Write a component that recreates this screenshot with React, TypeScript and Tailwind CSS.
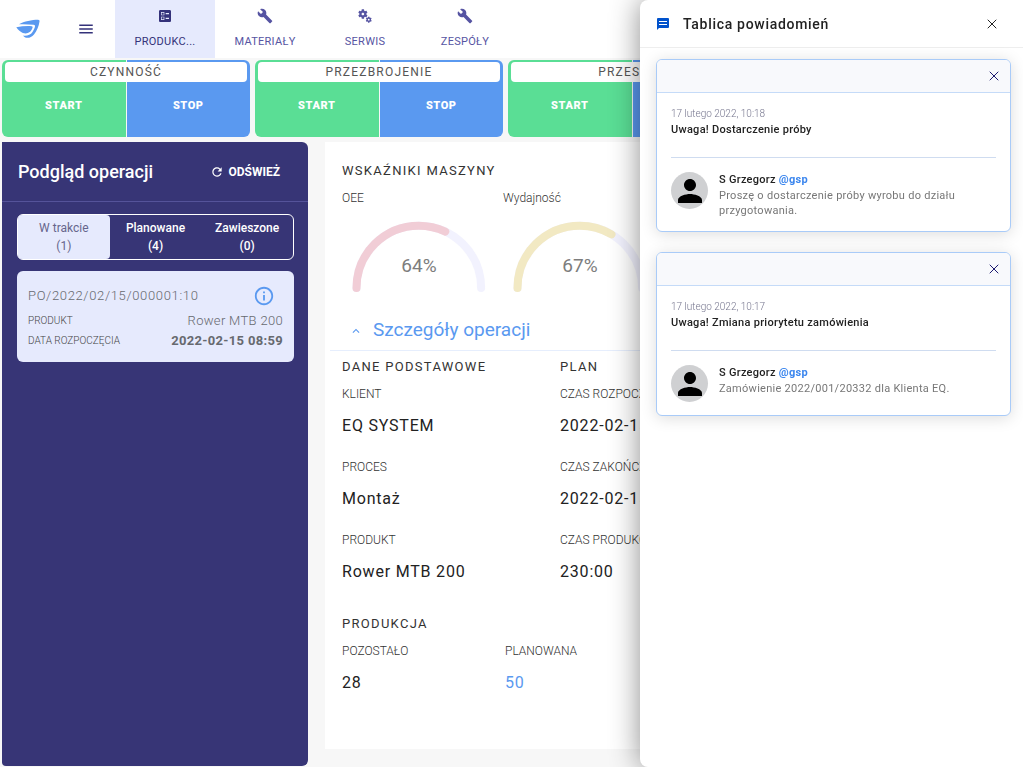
import React from "react";
import {
  MdBallot,
  MdBuild,
  MdInfoOutline,
  MdKeyboardArrowUp,
  MdMenu,
  MdMiscellaneousServices,
  MdPerson,
  MdRefresh,
} from "react-icons/md";
import type { IconType } from "react-icons";
import { X } from "lucide-react";
import clsx from "clsx";

interface NavItem {
  label: string;
  icon: IconType;
  active?: boolean;
}

interface Notification {
  id: number;
  date: string;
  title: string;
  author: string;
  login: string;
  content: string;
}

const NAV_ITEMS: NavItem[] = [
  { label: "PRODUKC...", icon: MdBallot, active: true },
  { label: "MATERIAŁY", icon: MdBuild },
  { label: "SERWIS", icon: MdMiscellaneousServices },
  { label: "ZESPÓŁY", icon: MdBuild },
];

const ACTIONS = ["CZYNNOŚĆ", "PRZEZBROJENIE", "PRZESTÓJ"];

const TABS = [
  { label: "W trakcie", count: 1 },
  { label: "Planowane", count: 4 },
  { label: "Zawieszone", count: 0 },
];

const BASIC_DATA = [
  { label: "KLIENT", value: "EQ SYSTEM" },
  { label: "PROCES", value: "Montaż" },
  { label: "PRODUKT", value: "Rower MTB 200" },
];

const PLAN_DATA = [
  { label: "CZAS ROZPOCZĘCIA", value: "2022-02-15 08:00" },
  { label: "CZAS ZAKOŃCZENIA", value: "2022-02-15 11:50" },
  { label: "CZAS PRODUKCJI", value: "230:00" },
];

const NOTIFICATIONS: Notification[] = [
  {
    id: 1,
    date: "17 lutego 2022, 10:18",
    title: "Uwaga! Dostarczenie próby",
    author: "S Grzegorz",
    login: "@gsp",
    content: "Proszę o dostarczenie próby wyrobu do działu przygotowania.",
  },
  {
    id: 2,
    date: "17 lutego 2022, 10:17",
    title: "Uwaga! Zmiana priorytetu zamówienia",
    author: "S Grzegorz",
    login: "@gsp",
    content: "Zamówienie 2022/001/20332 dla Klienta EQ.",
  },
];

const Logo: React.FC = () => (
  <svg viewBox="0 0 24 20" className="h-5 w-6" fill="#5a99f0">
    <path d="M3 5.300C8 2.200 16 .8 22 .7c1.300 0 1.700.7 1.500 1.900C22.800 7 21 12 18 15.500 15 19 11.200 19.600 8.500 18L6.800 16.600c4 .7 7.700-.6 9.700-3.600 1.500-2.200 2.300-4.300 2.500-5.700.1-1-.4-1.400-1.400-1.500C13 5.300 8 5.100 3 5.300Z" />
    <path d="M.3 8.200c5.200-1 10.700-1.300 15.400-1 .9.100 1.100.6.900 1.300-.5 1.900-1.500 3.500-2.900 4.600-1.900 1.500-4.700 1.600-6.800.8C4.500 12.800 2.200 11 .3 8.200Z" />
  </svg>
);

const MessageIcon: React.FC = () => (
  <svg viewBox="0 0 12 12" className="h-3 w-3 shrink-0">
    <path d="M1 0h10a1 1 0 0 1 1 1v8a1 1 0 0 1-1 1H2l-2 2V1a1 1 0 0 1 1-1Z" fill="#0052cc" />
    <path d="M2 3.500h8M2 6.500h8" stroke="#fff" />
  </svg>
);

const Header: React.FC = () => (
  <header className="flex h-[58px] bg-white text-[#34327a]">
    <a href="#" aria-label="Strona główna" className="flex w-14 items-center justify-end pr-4">
      <Logo />
    </a>
    <button aria-label="Menu" className="flex w-[59px] items-center justify-center">
      <MdMenu className="h-[18px] w-[18px]" />
    </button>
    <nav className="flex">
      {NAV_ITEMS.map(({ label, icon: Icon, active }) => (
        <a
          key={label}
          href="#"
          className={clsx(
            "flex w-[100px] flex-col items-center gap-2.5 pt-2 text-[11px] leading-4 tracking-wide",
            active ? "bg-[#e6eafd]" : "text-[#5654a2]"
          )}
        >
          <Icon className="h-4 w-4" />
          <span>{label}</span>
        </a>
      ))}
    </nav>
  </header>
);

const ActionGroup: React.FC<{ name: string }> = ({ name }) => (
  <section className="relative grid h-[77px] w-[248px] shrink-0 grid-cols-2 gap-px overflow-hidden rounded-md text-[11px] font-black tracking-wider text-white">
    <button className="bg-[#5ade95] pt-4">START</button>
    <button className="bg-[#5a99f0] pt-4">STOP</button>
    <h2 className="absolute inset-x-[3px] top-0.5 rounded bg-white text-center text-xs leading-5 font-normal tracking-widest text-[#555]">
      {name}
    </h2>
  </section>
);

const Sidebar: React.FC = () => (
  <aside className="w-[306px] shrink-0 rounded-r-md rounded-bl-sm bg-[#373576] text-white">
    <div className="flex h-[60px] items-center justify-between border-b border-[#55539a] pr-7 pl-4">
      <h1 className="text-lg font-medium">Podgląd operacji</h1>
      <button className="flex items-center gap-1 text-xs font-bold">
        <MdRefresh className="h-3.5 w-3.5" />
        ODŚWIEŻ
      </button>
    </div>
    <div className="pt-3 pr-3.5 pl-[15px]">
      <div className="grid h-[46px] grid-cols-3 rounded-md border border-white">
        {TABS.map(({ label, count }, index) => (
          <button
            key={label}
            className={clsx(
              "flex flex-col items-center justify-center rounded text-xs leading-[18px]",
              index === 0 ? "bg-[#e6eafd] text-[#66668c]" : "font-medium"
            )}
          >
            <span>{label}</span>
            <span>({count})</span>
          </button>
        ))}
      </div>
      <article className="mt-[11px] flex h-[91px] flex-col rounded-md bg-[#e6eafd] px-[11px] pt-3.5 text-[#66696f]">
        <div className="flex h-[22px] items-center justify-between pr-2 text-[13px] font-light tracking-wider">
          PO/2022/02/15/000001:10
          <button aria-label="Informacje">
            <MdInfoOutline className="h-[22px] w-[22px] text-[#5a99f0]" />
          </button>
        </div>
        <dl className="text-[13px] leading-5 tracking-wide">
          <div className="flex justify-between pt-1">
            <dt className="text-[10px] font-light tracking-normal text-[#444]">PRODUKT</dt>
            <dd className="font-light">Rower MTB 200</dd>
          </div>
          <div className="flex justify-between">
            <dt className="text-[10px] font-light tracking-normal text-[#444]">DATA ROZPOCZĘCIA</dt>
            <dd className="font-bold">2022-02-15 08:59</dd>
          </div>
        </dl>
      </article>
    </div>
  </aside>
);

interface GaugeProps {
  label: string;
  percent: number;
  color: string;
}

const Gauge: React.FC<GaugeProps> = ({ label, percent, color }) => (
  <div className="w-[161px] shrink-0">
    <h3 className="text-xs leading-4 font-light text-[#333]">{label}</h3>
    <svg viewBox="0 0 154 88" className="mt-1.5 h-[88px] w-[154px]" fill="none" strokeWidth="8" strokeLinecap="round">
      <path d="M14.500 76a62.300 62.300 0 0 1 124.600 0" stroke="#f2f2fe" />
      <path
        d="M14.500 76a62.300 62.300 0 0 1 124.600 0"
        stroke={color}
        pathLength="100"
        strokeDasharray={`${percent} 200`}
      />
      <text x="77" y="60" textAnchor="middle" fontSize="19" fill="#7d7d7d">
        {percent}%
      </text>
    </svg>
  </div>
);

const Heading: React.FC<{ children: React.ReactNode }> = ({ children }) => (
  <h3 className="text-[13px] leading-4 tracking-widest text-[#333]">{children}</h3>
);

interface FieldsProps {
  title: string;
  fields: { label: string; value: string }[];
}

const Fields: React.FC<FieldsProps> = ({ title, fields }) => (
  <div className="w-[218px] shrink-0 whitespace-nowrap">
    <Heading>{title}</Heading>
    <dl className="mt-[11px] flex flex-col gap-[23px]">
      {fields.map(({ label, value }) => (
        <div key={label}>
          <dt className="text-xs leading-4 font-light text-[#333]">{label}</dt>
          <dd className="mt-3.5 text-base leading-5 tracking-wider text-[#222]">{value}</dd>
        </div>
      ))}
    </dl>
  </div>
);

const Details: React.FC = () => (
  <main className="mb-[17px] min-w-0 flex-1 overflow-hidden bg-white pt-[21px] pl-[17px]">
    <Heading>WSKAŹNIKI MASZYNY</Heading>
    <div className="mt-[11px] flex">
      <Gauge label="OEE" percent={64} color="#f1cdd6" />
      <Gauge label="Wydajność" percent={67} color="#f2e9c3" />
    </div>
    <h2 className="mt-[11px] -ml-3 flex h-10 items-center gap-2.5 border-b border-[#e6eefd] pl-[19px] text-[19px] text-[#5a99f0]">
      <MdKeyboardArrowUp className="h-3.5 w-3.5" />
      Szczegóły operacji
    </h2>
    <div className="mt-2 flex">
      <Fields title="DANE PODSTAWOWE" fields={BASIC_DATA} />
      <Fields title="PLAN" fields={PLAN_DATA} />
    </div>
    <div className="mt-[34px]">
      <Heading>PRODUKCJA</Heading>
      <dl className="mt-[11px] flex text-base leading-5 tracking-wider">
        <div className="w-[163px]">
          <dt className="text-xs leading-4 font-light tracking-normal text-[#333]">POZOSTAŁO</dt>
          <dd className="mt-3.5 text-[#222]">28</dd>
        </div>
        <div>
          <dt className="text-xs leading-4 font-light tracking-normal text-[#333]">PLANOWANA</dt>
          <dd className="mt-3.5 text-[#5a99f0]">50</dd>
        </div>
      </dl>
    </div>
  </main>
);

const NotificationCard: React.FC<{ item: Notification }> = ({ item }) => (
  <article className="overflow-hidden rounded-md border border-[#a9cbf8] bg-white shadow-[0_2px_16px_rgba(0,0,0,0.14)]">
    <div className="flex h-[33px] items-center justify-end border-b border-[#c5dbf8] bg-[#f8f9fc] pr-2">
      <button aria-label="Zamknij" className="text-[#1c1a70]">
        <X className="h-4 w-4" strokeWidth={1.5} />
      </button>
    </div>
    <div className="px-3.5 pt-[13px] pb-[13px] text-[11px] leading-4 tracking-wide">
      <time className="block text-[10px] font-light tracking-normal text-[#77778f]">{item.date}</time>
      <h3 className="border-b border-[#cfdcf0] pb-[19px] font-medium text-[#222]">{item.title}</h3>
      <div className="flex gap-[11px] pt-3.5">
        <span className="flex h-[37px] w-[37px] shrink-0 items-center justify-center rounded-full bg-[#cfd0d2]">
          <MdPerson className="h-9 w-9 text-black" />
        </span>
        <div>
          <p className="font-medium text-[#222]">
            {item.author}{" "}
            <a href="#" className="font-bold text-[#3b86ee]">
              {item.login}
            </a>
          </p>
          <p className="leading-[15px] text-[#777]">{item.content}</p>
        </div>
      </div>
    </div>
  </article>
);

const NotificationDrawer: React.FC = () => (
  <aside className="fixed inset-y-0 right-0 w-[383px] rounded-l-lg bg-white shadow-[0_0_30px_rgba(0,0,0,0.45)]">
    <div className="flex h-12 items-center gap-3.5 border-b border-[#eee] pr-[23px] pl-[17px]">
      <MessageIcon />
      <h2 className="flex-1 text-sm font-medium tracking-wider text-[#222]">Tablica powiadomień</h2>
      <button aria-label="Zamknij panel" className="text-[#222]">
        <X className="h-4 w-4" strokeWidth={1.5} />
      </button>
    </div>
    <div className="flex flex-col gap-5 py-[11px] pr-3 pl-4">
      {NOTIFICATIONS.map((item) => (
        <NotificationCard key={item.id} item={item} />
      ))}
    </div>
  </aside>
);

const App: React.FC = () => {
  return (
    <div className="flex h-screen flex-col overflow-hidden bg-[#f7f7f7] font-[Roboto,sans-serif]">
      <Header />
      <div className="flex gap-[5px] overflow-hidden py-0.5 pl-0.5">
        {ACTIONS.map((name) => (
          <ActionGroup key={name} name={name} />
        ))}
      </div>
      <div className="flex min-h-0 flex-1 gap-[17px] pt-[3px] pb-px pl-0.5">
        <Sidebar />
        <Details />
      </div>
      <NotificationDrawer />
    </div>
  );
};

export default App;
